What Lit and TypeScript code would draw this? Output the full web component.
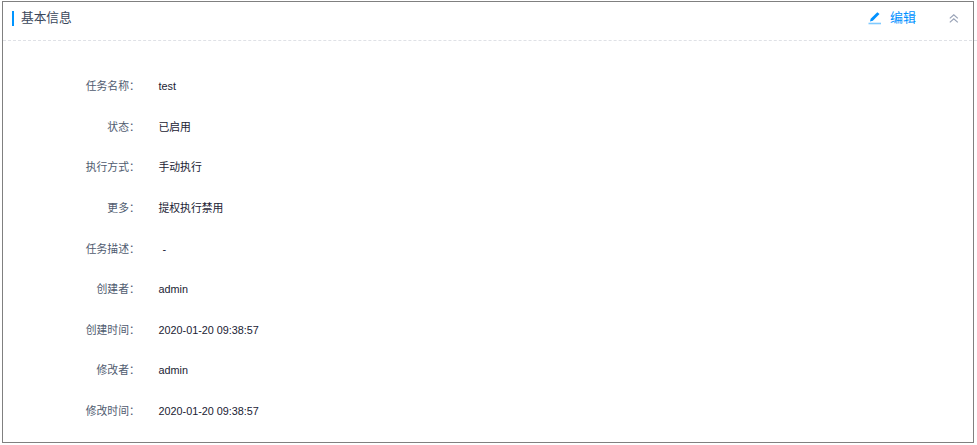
import { LitElement, html, css } from "lit";
import { customElement } from "lit/decorators.js";

const rows: [string, string][] = [
  ["任务名称", "test"],
  ["状态", "已启用"],
  ["执行方式", "手动执行"],
  ["更多", "提权执行禁用"],
  ["任务描述", "-"],
  ["创建者", "admin"],
  ["创建时间", "2020-01-20 09:38:57"],
  ["修改者", "admin"],
  ["修改时间", "2020-01-20 09:38:57"],
];

@customElement("app-root")
export class AppRoot extends LitElement {
  static styles = css`
    :host { display: block; box-sizing: border-box; height: 445px; padding: 1px 3px 2px 2px; background: #fff; font-family: "Liberation Sans", "Noto Sans CJK SC", sans-serif; overflow: hidden; }
    .panel { box-sizing: border-box; height: 442px; border: 1px solid #808080; }
    .head { box-sizing: border-box; height: 39px; display: flex; align-items: center; margin-right: -4px; border-bottom: 1px dashed #dfe1e6; padding: 0 18px 5px 9px; }
    .bar { width: 2px; height: 15px; background: #0095ff; margin-right: 7px; }
    .title { flex: 1; font-size: 12.7px; line-height: 18px; padding-bottom: 1px; color: #3b475b; }
    .edit { display: flex; align-items: center; gap: 9px; font-size: 13px; line-height: 18px; padding-bottom: 1px; color: #0091ff; margin-right: 33px; }
    svg { display: block; }
    .list { padding-top: 25px; }
    .row { display: flex; height: 40.6px; line-height: 16px; align-items: center; font-size: 10.82px; color: #1a2233; }
    .label { width: 136.8px; text-align: right; color: #4f5b6f; margin-right: 18.7px; }
    .dash { padding-left: 4px; }
  `;
  render() {
    return html`<section class="panel">
      <div class="head">
        <i class="bar"></i><span class="title">基本信息</span>
        <span class="edit"><svg width="13" height="13" viewBox="0 0 13 13"><path d="M2 9.5L2.7 6.8L9.3 .2L11.5 2L4.8 8.8Z" fill="currentColor"/><path d="M.5 11.5H13" stroke="#80caff" stroke-width="1.6"/></svg>编辑</span>
        <svg width="10" height="9" viewBox="0 0 10 9" fill="none" stroke="#98a2b6" stroke-width="1.2"><path d="M.8 4.4L4.8 .8L8.8 4.4M.8 8.4L4.8 4.8L8.8 8.4" /></svg>
      </div>
      <div class="list">${rows.map(([k, v]) => html`<div class="row"><span class="label">${k}：</span><span class=${v === "-" ? "dash" : ""}>${v}</span></div>`)}</div>
    </section>`;
  }
}
